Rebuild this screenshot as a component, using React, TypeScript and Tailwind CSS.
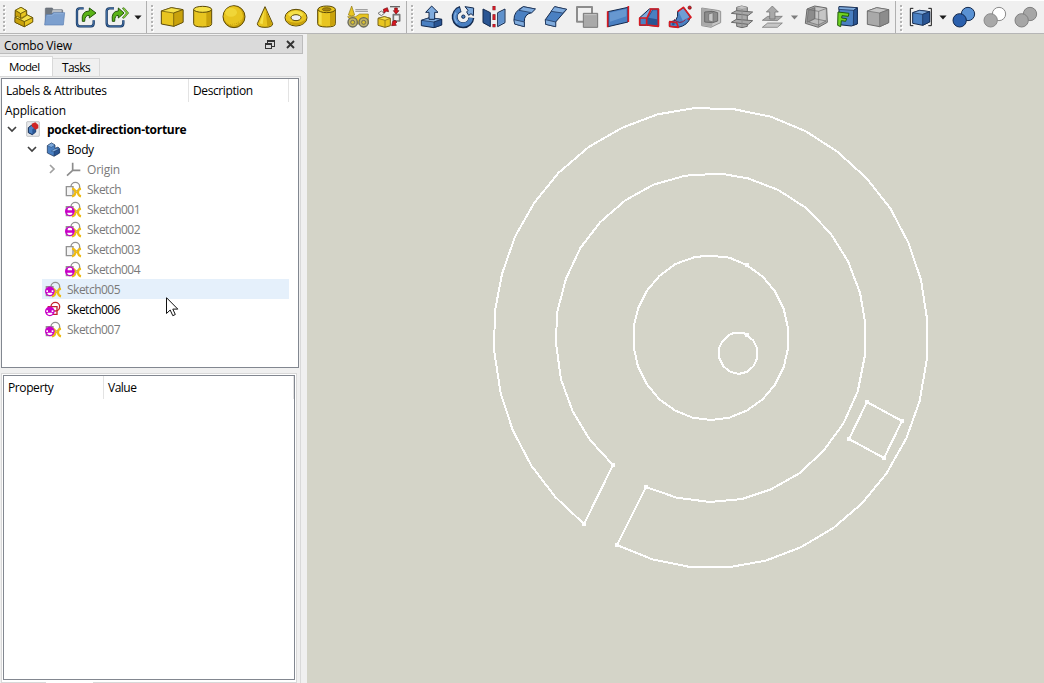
import React from "react";

const OUTER =
  "411,1365 517,1408 630,1431 750,1431 857,1412 962,1372 1060,1314 1146,1240 1219,1151 1279,1045 1319,933 1341,805 1341,686 1323,570 1286,460 1231,355 1159,264 1072,185 976,123 872,80 764,58 645,54 533,73 427,113 326,171 236,248 163,338 105,440 66,552 45,662 42,780 62,910 98,1020 154,1127 226,1221 312,1302 399,1125 330,1050 278,964 243,868 228,760 231,668 258,566 301,474 361,396 436,331 520,284 616,257 700,252 728,252 804,265 895,300 980,355 1053,432 1104,514 1140,608 1155,695 1155,795 1133,905 1090,1001 1030,1083 958,1150 873,1198 786,1227 690,1236 590,1223 498,1191";
const MIDDLE =
  "800,525 848,560 885,604 911,656 924,715 924,775 911,832 885,884 848,928 800,962 748,983 692,990 638,983 586,962 538,928 501,883 474,830 462,775 462,706 474,656 501,602 538,558 586,522 645,501 690,497 748,503";
const SMALL =
  "800,735 820,752 832,775 832,804 820,829 800,846 776,852 752,846 730,829 717,803 717,775 726,755 748,734 765,728 790,728";
const SQUARE = "1161,936 1266,993 1212,1104 1107,1047";
const POINTS = [
  [411, 1365], [312, 1302], [399, 1125], [498, 1191], [800, 525],
  [800, 735], [1161, 936], [1266, 993], [1212, 1104], [1107, 1047],
];

function Viewport() {
  return (
    <svg className="block h-[649px] w-[737px] shrink-0 bg-[#d4d4c8]" viewBox="-519 -168 2211 1947" shapeRendering="crispEdges">
      <g fill="none" stroke="#fff" strokeWidth="6" strokeLinejoin="round">
        <polygon points={OUTER} />
        <polygon points={MIDDLE} />
        <polygon points={SMALL} />
        <polygon points={SQUARE} />
      </g>
      {POINTS.map(([x, y], i) => (
        <rect key={i} x={x - 6} y={y - 6} width="12" height="12" fill="#fff" />
      ))}
    </svg>
  );
}

/* Toolbar icons are drawn at three units per pixel on a 31x30 button. */
function Icon({ x, children }: { x: number; children: React.ReactNode }) {
  return (
    <svg className="block h-[30px] w-[31px] shrink-0" viewBox={`${x} 6 93 90`} strokeLinejoin="round" strokeWidth="3">
      {children}
    </svg>
  );
}

const Y1 = "#f5e14a";
const Y2 = "#e8c520";
const Y3 = "#c9a20c";
const YS = "#5c4a06";
const B1 = "#7fabdd";
const B2 = "#4a80c2";
const B3 = "#2a5593";
const BS = "#13294d";
const G1 = "#c6c6c6";
const G2 = "#a9a9a9";
const G3 = "#8c8c8c";
const GS = "#6a6a6a";

function Handle() {
  return (
    <svg className="mt-[3px] block h-[27px] w-[3px] shrink-0" viewBox="0 0 3 27" shapeRendering="crispEdges">
      {[0, 4, 8, 12, 16, 20, 24].map((y) => (
        <g key={y}>
          <rect x="1" y={y + 1} width="2" height="2" fill="#fff" />
          <rect x="0" y={y} width="2" height="2" fill="#b4b4b4" />
        </g>
      ))}
    </svg>
  );
}

function Arrow({ wide, dim }: { wide?: boolean; dim?: boolean }) {
  return (
    <svg className={wide ? "block h-[30px] w-[13px] shrink-0" : "block h-[30px] w-[12px] shrink-0"} viewBox="-6 -14 12 30">
      <path d="M-3.6-.5H3.6L0 3.4Z" fill={dim ? "#7d7d7d" : "#1a1a1a"} />
    </svg>
  );
}

function Spheres({ x, a, b, s }: { x: number; a: string; b: string; s: string }) {
  return (
    <Icon x={x}>
      <circle cx={x + 57} cy="42" r="20" fill={b} stroke={s} />
      <circle cx={x + 32} cy="61" r="20" fill={a} stroke={s} />
    </Icon>
  );
}

function Toolbar() {
  return (
    <header className="flex h-[34px] border-t border-b border-t-white border-b-[#b6b6b6] bg-[#f0f0f0]">
      <div className="flex w-[147px] shrink-0 border-r border-[#b0b0b0] pt-px pl-[3px]">
        <Handle />
        <div className="ml-[2px] flex">
          <Icon x={24}>
            <path d="M46 31 63 22 80 32V44L98 53V66L73 80 45 67Z" fill={Y2} stroke={YS} />
            <path d="M46 31 63 22 79 32 62 41Z" fill={Y1} stroke={YS} strokeWidth="2" />
            <path d="M46 31 62 41V57L46 48Z" fill={Y3} stroke={YS} strokeWidth="2" />
            <path d="M62 41 79 32V46L62 55Z" fill={Y2} stroke={YS} strokeWidth="2" />
            <path d="M45 52 53 49 64 57 82 45 98 53 73 65Z" fill={Y1} stroke={YS} strokeWidth="2" />
            <path d="M73 65 98 53V66L73 80Z" fill={Y2} stroke={YS} strokeWidth="2" />
            <path d="M45 52 73 65V80L45 67Z" fill={Y3} stroke={YS} strokeWidth="2" />
          </Icon>
          <Icon x={117}>
            <path d="M136 74V26Q136 24 138 24H157L160 29H186Q188 29 188 32V60Z" fill="#6f7780" stroke="#606873" strokeWidth="2" />
            <path d="M158 29H185V38H155Z" fill="#b9bec5" />
            <path d="M134 75 138 44H155L160 38H194L190 75Z" fill="#7c9fce" stroke="#5b7fb3" strokeWidth="2" />
            <path d="M142 46H157L162 41H191" fill="none" stroke="#98b6de" strokeWidth="2" />
          </Icon>
          <Icon x={210}>
            <path d="M251 25H239Q231 25 231 33V70Q231 79 239 79H273Q281 79 281 70V61" fill="none" stroke="#17365f" strokeWidth="7" />
            <path d="M251 25H239Q231 25 231 33V70Q231 79 239 79H273Q281 79 281 70V61" fill="none" stroke="#4d80bb" strokeWidth="2.5" />
            <path d="M247 64Q243 33 268 33V24L288 39 268 54V46Q254 45 254 64Z" fill="#5ab316" stroke="#23540a" />
          </Icon>
          <Icon x={303}>
            <path d="M342 25H329Q320 25 320 33V70Q320 79 329 79H362Q370 79 370 70V61" fill="none" stroke="#17365f" strokeWidth="7" />
            <path d="M342 25H329Q320 25 320 33V70Q320 79 329 79H362Q370 79 370 70V61" fill="none" stroke="#4d80bb" strokeWidth="2.5" />
            <path d="M337 64Q333 33 355 33V24L372 39 355 54V46Q344 45 344 64Z" fill="#5ab316" stroke="#23540a" />
            <path d="M367 25 379 39 367 53 372 55 386 39 372 23Z" fill="#8bd63c" stroke="#2d620e" strokeWidth="2" />
          </Icon>
          <Arrow />
        </div>
      </div>

      <div className="flex w-[260px] shrink-0 border-r border-[#b0b0b0] pt-px pl-[4px]">
        <Handle />
        <div className="ml-[2px] flex">
          <Icon x={468}>
            <path d="M484 33 514 23 549 29V67L521 79 484 72Z" fill={Y2} stroke={YS} />
            <path d="M484 33 514 23 549 29 521 39Z" fill={Y1} stroke={YS} strokeWidth="2" />
            <path d="M521 39 549 29V67L521 79Z" fill={Y3} stroke={YS} strokeWidth="2" />
          </Icon>
          <Icon x={561}>
            <path d="M581 29V71Q581 81 608 81T635 71V29Z" fill={Y2} stroke={YS} />
            <path d="M619 30H633V71Q629 77 619 79Z" fill={Y3} />
            <ellipse cx="608" cy="28" rx="27" ry="9" fill={Y1} stroke={YS} />
          </Icon>
          <Icon x={24}>
            <circle cx="72" cy="50" r="33" fill={Y3} stroke={YS} />
            <circle cx="70" cy="48" r="29" fill={Y2} />
            <ellipse cx="63" cy="37" rx="18" ry="13" fill={Y1} opacity=".6" />
            <path d="M80 70 99 57M60 74 90 69" stroke="#a98407" strokeWidth="2" strokeDasharray="2 4" />
          </Icon>
          <Icon x={117}>
            <path d="M165 20 188 71Q188 82 165 82T142 71Z" fill={Y2} stroke={YS} />
            <path d="M167 27 186 72Q184 78 172 79Z" fill={Y3} />
            <path d="M163 30 149 70 158 73Z" fill={Y1} />
          </Icon>
          <Icon x={210}>
            <ellipse cx="258" cy="53" rx="33" ry="25" fill={Y2} stroke={YS} />
            <path d="M229 60Q238 78 262 76T289 56Q275 68 258 68T229 60Z" fill={Y3} />
            <ellipse cx="257" cy="43" rx="22" ry="10" fill={Y1} />
            <ellipse cx="258" cy="53" rx="15" ry="9" fill="#f0f0f0" stroke={YS} />
          </Icon>
          <Icon x={303}>
            <path d="M323 29V71Q323 81 350 81T376 71V29Z" fill={Y2} stroke={YS} />
            <path d="M360 31H375V71Q371 77 360 79Z" fill={Y3} />
            <path d="M327 35H335V75L327 72Z" fill={Y1} />
            <ellipse cx="350" cy="28" rx="26" ry="10" fill={Y2} stroke={YS} />
            <ellipse cx="350" cy="28" rx="13" ry="5" fill="#a68310" stroke={YS} strokeWidth="2" />
          </Icon>
          <Icon x={396}>
            <path d="M425 18 434 45Q425 51 415 45Z" fill={Y2} stroke="#8f7816" strokeWidth="2" />
            <path d="M436 29H473M436 34H474" stroke="#929292" />
            <path d="M413 50H437L449 42H475V72H431Z" fill={Y2} stroke="#8f7816" strokeWidth="2" />
            <circle cx="428" cy="67" r="14" fill="#bfb267" stroke="#68695c" strokeWidth="4" />
            <circle cx="428" cy="67" r="6" fill="#d9bf2c" stroke="#6c6c5e" />
            <circle cx="461" cy="67" r="14" fill="#bfb267" stroke="#68695c" strokeWidth="4" />
            <circle cx="461" cy="67" r="6" fill="#d9bf2c" stroke="#6c6c5e" />
          </Icon>
          <Icon x={489}>
            <path d="M504 55 523 50 541 55V77L525 82 504 76Z" fill={Y2} stroke="#796316" />
            <path d="M504 55 523 50 541 55 525 61Z" fill={Y1} stroke="#796316" strokeWidth="2" />
            <path d="M525 61V81" stroke="#796316" strokeWidth="2" />
            <path d="M504 40 514 33 523 40 514 47Z" fill="none" stroke="#777" />
            <path d="M540 20H570" stroke="#666" strokeWidth="4" />
            <rect x="550" y="44" width="19" height="19" fill="none" stroke="#777" strokeWidth="5" />
            <path d="M520 28 532 23 536 35 529 34 522 39Z" fill="#d7151d" stroke="#6e0a10" strokeWidth="2" />
            <path d="M554 24H562V32H567L558 42 550 32H554Z" fill="#d7151d" stroke="#6e0a10" strokeWidth="2" />
            <path d="M548 64 545 77 559 76 556 71 561 66 555 61Z" fill="#d7151d" stroke="#6e0a10" strokeWidth="2" />
          </Icon>
        </div>
      </div>

      <div className="flex w-[489px] shrink-0 border-r border-[#b0b0b0] pt-px pl-[4px]">
        <Handle />
        <div className="ml-[2px] flex">
          <Icon x={18}>
            <path d="M34 61 59 53 95 58V75L72 83 34 77Z" fill={B2} stroke={BS} />
            <path d="M34 61 59 53 95 58 72 66Z" fill={B1} stroke={BS} strokeWidth="2" />
            <path d="M72 66 95 58V75L72 83Z" fill={B3} stroke={BS} strokeWidth="2" />
            <path d="M65 18 84 37H74V58H57V37H47Z" fill={B1} stroke={BS} />
          </Icon>
          <Icon x={111}>
            <path d="M152 27A25 25 0 1 0 184 53" fill="none" stroke={BS} strokeWidth="18" />
            <path d="M150 28A24 24 0 1 0 183 54" fill="none" stroke={B2} strokeWidth="12" />
            <path d="M138 38A25 25 0 0 0 142 69" fill="none" stroke={B1} strokeWidth="5" />
            <path d="M165 20 191 24 190 47 183 41 176 46 170 36 174 31Z" fill={B1} stroke={BS} />
            <circle cx="160" cy="50" r="5" fill={B2} stroke={BS} />
          </Icon>
          <Icon x={204}>
            <path d="M219 27 241 38V80L219 68Z" fill={B3} stroke={BS} />
            <path d="M285 27 263 38V80L285 68Z" fill={B1} stroke={BS} />
            <path d="M266 39 282 31V66L266 75Z" fill={B2} opacity=".6" />
            <path d="M252 18V31M252 43V60M252 72V82" stroke="#73131c" strokeWidth="9" />
            <path d="M252 19V30M252 44V59M252 73V81" stroke="#e51d2a" strokeWidth="5" />
          </Icon>
          <Icon x={297}>
            <path d="M312 59Q311 34 340 20L376 27 365 38Q342 43 343 65V80L314 72Z" fill={B2} stroke={BS} />
            <path d="M340 20 376 27 365 38 327 31Z" fill={B1} stroke={BS} strokeWidth="2" />
            <path d="M312 59 343 66V80L314 72Z" fill={B1} stroke={BS} strokeWidth="2" />
          </Icon>
          <Icon x={390}>
            <path d="M406 59 434 20 470 28 437 66V80L407 73Z" fill={B2} stroke={BS} />
            <path d="M434 20 470 28 458 39 423 34Z" fill={B1} stroke={BS} strokeWidth="2" />
            <path d="M406 59 437 66V80L407 73Z" fill={B1} stroke={BS} strokeWidth="2" />
          </Icon>
          <Icon x={483}>
            <rect x="501" y="21" width="45" height="44" fill="none" stroke="#8d8d8d" strokeWidth="6" />
            <rect x="520" y="40" width="43" height="42" fill="#a9a9a9" stroke="#777" />
            <path d="M523 44H559" stroke="#c5c5c5" />
          </Icon>
          <Icon x={576}>
            <path d="M594 35 654 22V66L594 80Z" fill={B2} stroke={BS} />
            <path d="M600 38 649 27V49L600 65Z" fill={B1} opacity=".55" />
            <path d="M593 34V82M655 18V66" stroke="#d71a22" strokeWidth="5" />
          </Icon>
          <Icon x={24}>
            <path d="M44 53 73 27H101V79L65 76H44Z" fill={B2} stroke={BS} />
            <path d="M46 54 74 28 82 30 65 54Z" fill={B1} />
            <path d="M65 55 82 30 99 30V77L65 75Z" fill={B3} />
            <path d="M44 54H65V75H44ZM66 54 78 28M74 27H100V79L66 75" fill="none" stroke="#d71a22" strokeWidth="5" />
            <path d="M70 53 84 31H96V58Z" fill={B2} />
          </Icon>
          <Icon x={117}>
            <path d="M133 66 152 61Q160 51 158 34L177 23 196 52Q189 76 160 82L133 79Z" fill={B2} stroke={BS} />
            <path d="M160 34 175 25 193 51Q181 54 175 65Z" fill={B1} opacity=".7" />
            <path d="M134 65 155 68 160 82 134 79ZM158 35 175 22 198 52 188 59" fill="none" stroke="#d71a22" strokeWidth="5" />
            <path d="M147 58Q165 76 181 59" fill="none" stroke="#8b1c42" strokeWidth="3" />
            <circle cx="194" cy="23" r="5" fill="#d71a22" stroke="#641217" strokeWidth="2" />
            <circle cx="145" cy="72" r="4" fill={B3} />
          </Icon>
          <Icon x={210}>
            <path d="M230 24 277 31 287 34V68L276 73 258 82 230 77Z" fill={G1} stroke="#939393" />
            <path d="M231 25 262 30V80L231 76Z" fill={G2} />
            <path d="M239 36 264 34 278 38V63L263 68 239 66Z" fill={G3} stroke={GS} />
            <path d="M251 42 264 38V66L251 62Z" fill={G1} stroke={GS} strokeWidth="2" />
          </Icon>
          <Icon x={303}>
            <path d="M335 22 350 18 367 22V79L351 83 335 79Z" fill={G2} stroke={GS} />
            <path d="M335 22 350 18 367 22 351 26Z" fill={G1} />
            <path d="M319 40 334 32 383 36 370 46ZM319 67 334 58 383 62 370 73Z" fill={G2} stroke={GS} />
            <path d="M351 27V81" stroke={G3} />
          </Icon>
          <Icon x={396}>
            <path d="M412 61 428 49H472L457 62Z" fill={G2} stroke={GS} strokeWidth="2" />
            <path d="M442 18 460 36H450V57H434V36H424Z" fill={G2} stroke={GS} strokeWidth="2" />
            <path d="M412 82 428 69H472L457 82Z" fill={G1} stroke={GS} strokeWidth="2" />
          </Icon>
          <Arrow wide dim />
          <Icon x={528}>
            <path d="M541 70 546 27 569 18 605 24 607 67 580 82Z" fill={G2} stroke={GS} />
            <path d="M550 31 569 23V56L546 67Z" fill={G3} stroke={GS} strokeWidth="2" />
            <path d="M570 22 602 25V60L580 68 570 56Z" fill={G1} />
            <path d="M570 56 603 63 580 75 551 66Z" fill="#bcbcbc" stroke={GS} strokeWidth="2" />
            <path d="M570 22V56M546 28 581 34V80M581 34 605 25" fill="none" stroke={GS} strokeWidth="2" />
          </Icon>
          <Icon x={-6}>
            <path d="M15 20 70 23V72L52 78 15 74Z" fill={B2} stroke={BS} />
            <path d="M15 20 70 23 59 31 14 28Z" fill={B1} stroke={BS} strokeWidth="2" />
            <path d="M59 31 70 24V71L58 76Z" fill={B3} stroke={BS} strokeWidth="2" />
            <path d="M12 36 45 40 43 49 24 47 23 54 38 56 35 64 22 62 20 80 11 76Z" fill="#70d321" stroke="#205b0b" />
          </Icon>
          <Icon x={87}>
            <path d="M100 33 128 23 164 29V68L137 80 100 73Z" fill={G2} stroke={GS} />
            <path d="M100 33 128 23 164 29 137 39Z" fill={G1} stroke={GS} strokeWidth="2" />
            <path d="M137 39 164 29V68L137 80Z" fill={G3} stroke={GS} strokeWidth="2" />
          </Icon>
        </div>
      </div>

      <div className="flex flex-1 pt-px pl-[4px]">
        <Handle />
        <div className="ml-[3px] flex">
          <Icon x={216}>
            <path d="M238 25H229V77H238M283 25H292V77H283" fill="none" stroke="#171717" strokeWidth="3" />
            <path d="M236 38 257 31 287 35V66L266 76 236 70Z" fill={B2} stroke={BS} />
            <path d="M236 38 257 31 287 35 266 43Z" fill={B1} stroke={BS} strokeWidth="2" />
            <path d="M266 43 287 35V66L266 76Z" fill={B3} stroke={BS} strokeWidth="2" />
          </Icon>
          <Arrow />
          <Spheres x={345} a="#2b60ad" b="#5991d3" s={BS} />
          <Spheres x={438} a="#a8a8a8" b="#ffffff" s="#8a8a8a" />
          <Spheres x={531} a="#a6a6a6" b="#a6a6a6" s="#808080" />
        </div>
      </div>
    </header>
  );
}

function SketchIcon({ kind, top }: { kind: "plain" | "mapped" | "active"; top?: boolean }) {
  const line = kind === "active" ? "#c4222b" : "#929292";
  return (
    <svg className="block h-[18px] w-[17px] shrink-0" viewBox="0 0 51 54">
      <circle cx="31" cy="20" r="13" fill="none" stroke={line} strokeWidth="4" />
      <path d={kind === "active" ? "M10 20H36V43H10Z" : "M4 20H24V47H4Z"} fill={kind === "active" ? "none" : "#f4f4f4"} stroke={line} strokeWidth="4" />
      {kind !== "active" && (
        <g fill="none" stroke="#eebb14" strokeWidth="6.5">
          <path d="M21 26Q31 27 31 37T21 49" />
          <path d="M48 26Q39 27 39 37T48 49" />
          <path d="M31 37H39" strokeWidth="5" />
        </g>
      )}
      {kind !== "plain" && (
        <g>
          <circle cx="14.5" cy="34" r="14.5" fill="#c800c8" />
          {top ? (
            <path d="M4 31H9V36H4ZM20 31H25V36H20Z" fill="#fff" />
          ) : (
            <path d="M8 31V27Q8 23 14.5 23T21 27V31Z" fill="#fff" />
          )}
          <path d="M7 38H22V41Q20 45 14.5 45T7 41Z" fill="#fff" />
        </g>
      )}
    </svg>
  );
}

function Chevron({ open }: { open: boolean }) {
  return (
    <svg className="block h-[10px] w-[10px] shrink-0" viewBox="0 0 10 10" fill="none" strokeWidth="1.7">
      {open ? <path d="M1 3 5 7 9 3" stroke="#404040" /> : <path d="M3 1 7 5 3 9" stroke="#a0a0a0" />}
    </svg>
  );
}

function SketchRow({ label, kind, top, hover }: { label: string; kind: "plain" | "mapped" | "active"; top?: boolean; hover?: boolean }) {
  return (
    <li className={top ? "flex h-[20px] pr-[9px] pl-[40px]" : "flex h-[20px] pr-[9px] pl-[60px]"}>
      <div className={hover ? "flex flex-1 items-center bg-[#e5f0fb] pl-[3px]" : "flex flex-1 items-center pl-[3px]"}>
        <SketchIcon kind={kind} top={top} />
        <span className={kind === "active" ? "ml-[5px] pt-[2px] tracking-[-0.5px] text-black" : "ml-[5px] pt-[2px] tracking-[-0.5px] text-[#7a7a7a]"}>{label}</span>
      </div>
    </li>
  );
}

function Tree() {
  return (
    <section className="relative mt-px ml-px h-[290px] w-[298px] border border-[#828790] bg-white">
      <div className="flex h-[23px]">
        <div className="flex w-[187px] items-center border-r border-[#e3e3e3] pt-px pl-[4px] tracking-[-0.3px]">Labels &amp; Attributes</div>
        <div className="flex w-[100px] items-center border-r border-[#e3e3e3] pt-px pl-[4px] tracking-[-0.4px]">Description</div>
      </div>
      <div className="h-[17px] pl-[3px] leading-[18px] tracking-[-0.15px]">Application</div>
      <ul>
        <li className="flex h-[20px] items-center pl-[5px]">
          <Chevron open />
          <svg className="ml-[8px] block h-[16px] w-[16px]" viewBox="0 0 48 48" strokeLinejoin="round">
            <rect x="5" y="2" width="38" height="44" rx="2" fill="#e9eaec" stroke="#a8aaad" strokeWidth="2" />
            <path d="M10 20 19 13 32 18V33L22 41 10 35Z" fill={B2} stroke={BS} strokeWidth="3" />
            <path d="M22 25 32 18V33L22 41Z" fill={B3} />
            <path d="M20 8 31 4 40 12V22L31 26 21 16Z" fill="#cf2525" />
          </svg>
          <span className="ml-[6px] pt-[2px] font-bold tracking-[-0.3px]">pocket-direction-torture</span>
        </li>
        <li className="flex h-[20px] items-center pl-[25px]">
          <Chevron open />
          <svg className="ml-[8px] block h-[16px] w-[16px]" viewBox="0 0 48 48" strokeLinejoin="round" stroke={BS} strokeWidth="2">
            <path d="M7 14 19 6 30 12V22L39 18 44 23V36L27 46 7 36Z" fill={B2} />
            <path d="M7 14 19 6 30 12 19 19Z" fill={B1} strokeWidth="1" />
            <path d="M19 30 30 23 43 24 27 32Z" fill={B1} strokeWidth="1" />
            <path d="M27 32 43 24V36L27 45Z" fill={B3} strokeWidth="1" />
          </svg>
          <span className="ml-[6px] pt-[2px] tracking-[-0.4px]">Body</span>
        </li>
        <li className="flex h-[20px] items-center pl-[45px] text-[#7a7a7a]">
          <Chevron open={false} />
          <svg className="ml-[8px] block h-[16px] w-[16px]" viewBox="0 0 48 48" fill="none" stroke="#8c8c8c" strokeWidth="5">
            <path d="M23 5V28H46M23 28 6 44" />
          </svg>
          <span className="ml-[6px] pt-[2px] tracking-[-0.2px]">Origin</span>
        </li>
        <SketchRow label="Sketch" kind="plain" />
        <SketchRow label="Sketch001" kind="mapped" />
        <SketchRow label="Sketch002" kind="mapped" />
        <SketchRow label="Sketch003" kind="plain" />
        <SketchRow label="Sketch004" kind="mapped" />
        <SketchRow label="Sketch005" kind="mapped" top hover />
        <SketchRow label="Sketch006" kind="active" top />
        <SketchRow label="Sketch007" kind="mapped" top />
      </ul>
      <svg className="absolute top-[218px] left-[164px] h-[20px] w-[13px]" viewBox="0 0 13 20">
        <path d="M.5.7V16.5L4.2 13 6.8 18.7 9.3 17.5 6.8 12.1H11.8Z" fill="#fff" stroke="#111" strokeWidth="1" />
      </svg>
    </section>
  );
}

export default function App() {
  return (
    <main className="flex h-[683px] w-[1044px] flex-col overflow-hidden bg-[#f0f0f0] font-['Open_Sans','Noto_Sans',sans-serif] text-[12px] leading-[16px] text-black">
      <Toolbar />
      <div className="flex h-[649px]">
        <aside className="w-[307px] shrink-0 pt-px">
          <div className="flex h-[19px] w-[303px] items-center border-t border-r border-b border-[#bcbcbc] bg-[#dadada] pl-[4px]">
            <span className="flex-1 pt-[2px] tracking-[-0.2px]">Combo View</span>
            <svg className="block h-[10px] w-[10px]" viewBox="0 0 10 10" fill="none" stroke="#333" shapeRendering="crispEdges">
              <path d="M2.5 3V.5H9V6H7" />
              <path d="M2 1H9M.5 4H7" strokeWidth="2" />
              <path d="M.5 3.5H6.5V8.5H.5Z" />
            </svg>
            <svg className="mr-[7px] ml-[11px] block h-[9px] w-[9px]" viewBox="0 0 9 9" stroke="#333" strokeWidth="1.9">
              <path d="M1 1 8 8M8 1 1 8" />
            </svg>
          </div>
          <div className="flex h-[22px] items-end pt-[2px]">
            <div className="flex h-[20px] w-[53px] items-center border-t border-r border-[#d9d9d9] bg-white pt-px pl-[9px] text-[11.5px] tracking-[-0.65px]">Model</div>
            <div className="flex h-[18px] w-[47px] items-center border-t border-r border-[#d9d9d9] pt-px pl-[9px] tracking-[-0.6px]">Tasks</div>
          </div>
          <div className="flex h-[607px] w-[301px] flex-col border-t border-r border-[#d9d9d9]">
            <Tree />
            <div className="mt-[5px] ml-px h-[310px] w-[296px] border border-[#d9d9d9] bg-white p-px">
              <section className="h-[305px] w-[292px] border border-[#828790]">
                <div className="flex h-[23px]">
                  <div className="flex w-[100px] items-center border-r border-[#e3e3e3] pt-px pl-[4px] tracking-[-0.4px]">Property</div>
                  <div className="flex flex-1 items-center border-r border-[#e3e3e3] pt-px pl-[4px] tracking-[-0.5px]">Value</div>
                </div>
              </section>
              <div className="mt-[2px] ml-[43px] h-px w-[47px] bg-white" />
            </div>
          </div>
        </aside>
        <Viewport />
      </div>
    </main>
  );
}
